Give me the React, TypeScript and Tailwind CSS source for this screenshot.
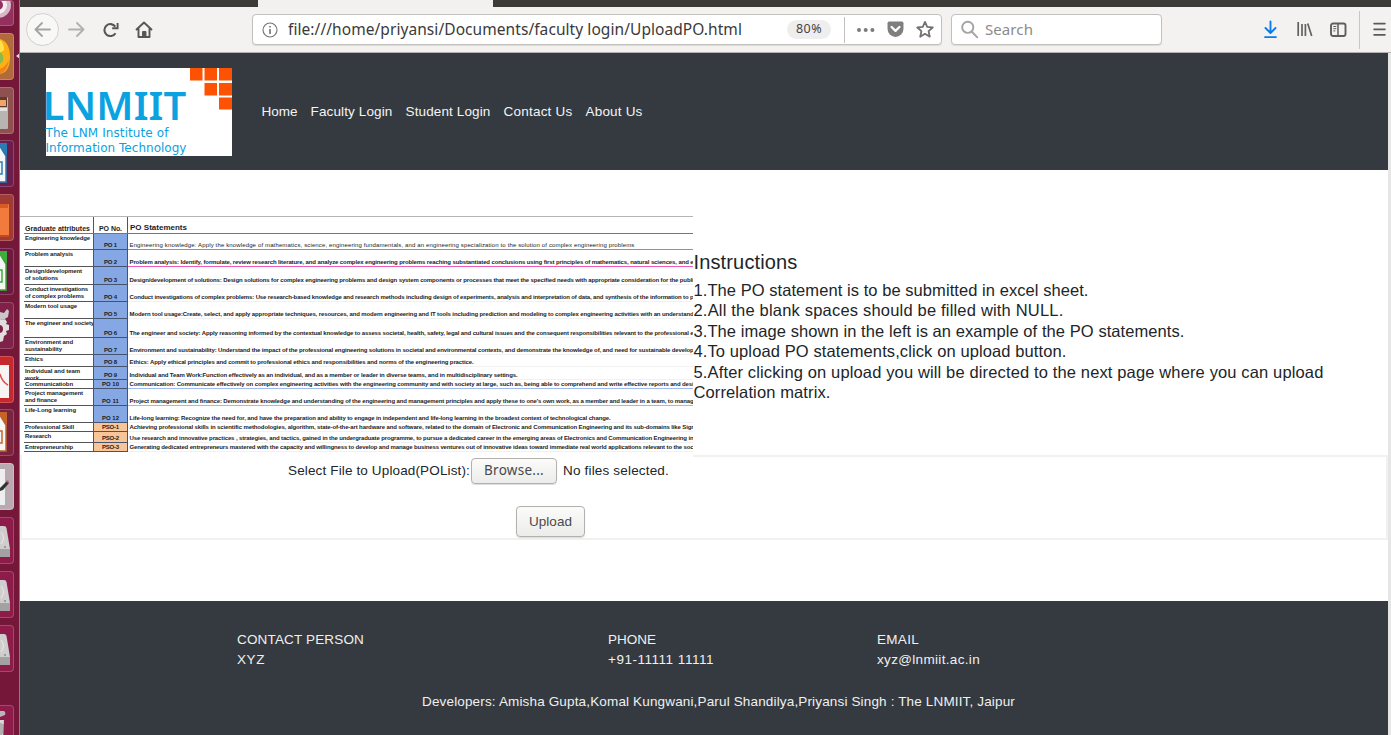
import { useLayoutEffect, useRef, useState, type ReactNode } from "react";

/** Single line of text whose tracking is adjusted so that it fills `w` pixels. */
function Fit({ w, children, className = "" }: { w: number; children: string; className?: string }) {
  const ref = useRef<HTMLSpanElement>(null);
  const [spacing, setSpacing] = useState(0);
  useLayoutEffect(() => {
    if (ref.current) {
      const natural = ref.current.getBoundingClientRect().width;
      setSpacing((w - natural) / children.length);
    }
  }, [w, children]);
  return (
    <span ref={ref} className={`inline-block whitespace-pre ${className}`} style={{ letterSpacing: spacing }}>
      {children}
    </span>
  );
}

function Tile({ tone, children, className = "h-[47px]" }: { tone: string; children?: ReactNode; className?: string }) {
  return (
    <div className={`w-[13.500px] shrink-0 overflow-hidden rounded-r-[4px] border-y border-r border-white/20 ${tone} ${className}`}>
      <svg width="14" height="47" viewBox="0 0 14 47" className="block">
        {children}
      </svg>
    </div>
  );
}

function Drive() {
  return (
    <Tile tone="bg-[#8d1c4b]">
      <path d="M0 8h4q2 0 2.500 2L10 31v7q0 1-1 1H0z" fill="#cfcdcd" />
      <path d="M0 31h10v7q0 1-1 1H0z" fill="#a3a1a1" />
      <path d="M1 14q5 6 0 12" fill="none" stroke="#e9e9e9" />
      <circle cx="5" cy="29" r="1" fill="#8a8888" />
    </Tile>
  );
}

function Doc({ fold, tone, mark }: { fold: string; tone: string; mark: string }) {
  return (
    <Tile tone={tone}>
      <path d="M-2 2l8 13v26h-8z" fill="#f6f6f6" stroke={fold} strokeWidth="1.500" />
      <path d="M-2 2h9v13z" fill={fold} />
      <path d="M0 21h2v12H0" fill="none" stroke={mark} strokeWidth="1.500" />
    </Tile>
  );
}

function Launcher() {
  return (
    <aside className="flex h-full w-[20px] shrink-0 flex-col gap-[6.8px] overflow-hidden border-r border-[#a86d87] bg-[#741739]">
      <Tile tone="bg-[#93305d]" className="h-[26px]">
        <circle cx="-2" cy="4" r="13" fill="#d9b6c6" />
        <circle cx="-2" cy="4" r="9" fill="#f4eef1" />
        <circle cx="-2" cy="4" r="5" fill="#93305d" />
      </Tile>
      <div className="flex items-center gap-[2px]">
        <Tile tone="bg-[#b06a3c]">
          <path d="M0 5q10 3 10 18T0 40z" fill="#fbb116" />
          <path d="M0 6q4 3 4 10l-4 3z" fill="#fde04a" />
          <path d="M0 18q4 2 3 9l-3 3z" fill="#8cba4c" />
          <path d="M0 35q7-3 9-10-1 12-9 15z" fill="#f08418" />
        </Tile>
        <svg width="4" height="6" viewBox="0 0 4 6" className="shrink-0"><path d="M4 0v6L0 3z" fill="#eedde4" /></svg>
      </div>
      <Tile tone="bg-[#8f5150]">
        <path d="M0 9h7q1 0 1 1v30q0 1-1 1H0z" fill="#b7b4b1" />
        <path d="M0 9h7v10H0z" fill="#5c3b2b" />
        <path d="M0 12h6v6H0z" fill="#f0a46c" />
        <path d="M0 20h7v3H0z" fill="#e4e2e0" />
      </Tile>
      <Doc fold="#2a7cb4" tone="bg-[#6b1d4b]" mark="#2a7cb4" />
      <Tile tone="bg-[#9f3a35]">
        <path d="M0 9h8q1 0 1 1v31H0z" fill="#f17a3c" />
        <path d="M0 9h8v4H0z" fill="#d95a24" />
        <path d="M0 40h9v2H0z" fill="#c24c1f" />
      </Tile>
      <Doc fold="#3dae39" tone="bg-[#6c1a3f]" mark="#3dae39" />
      <Tile tone="bg-[#7f2149]">
        <path d="M0 9l4 1 3-4 2 2-1 6-5 3-3-1z" fill="#c9c7c7" />
        <path d="M0 16l3 1 2-1 2 3-1 2 3 1v5l-3 1 1 3-3 2-1 5-3 1z" fill="#e0dede" />
        <circle cx="-1" cy="26" r="4" fill="#7f2149" />
      </Tile>
      <Tile tone="bg-[#c5282d]">
        <path d="M0 8h9v33H0z" fill="#f7f4f4" />
        <path d="M0 17q2 8 8 11" fill="none" stroke="#e5494c" strokeWidth="1.500" />
      </Tile>
      <Doc fold="#c4642b" tone="bg-[#7a2440]" mark="#c4642b" />
      <Tile tone="bg-[#b9a9b1]">
        <path d="M0 5h5v36H0z" fill="#eeeeee" />
        <path d="M0 24l7-7 2 2-6 7-3 1z" fill="#333333" />
        <path d="M6 17l2-1 1 2-1 1z" fill="#d8587a" />
      </Tile>
      <Drive />
      <Drive />
      <Drive />
      <div className="h-[20px] shrink-0" />
      <Tile tone="bg-[#8d1c4b]">
        <path d="M0 5h4q2 1 1 4l-5 2z" fill="#b9b7b7" />
        <path d="M0 14h4l-1 20H0z" fill="#d8d6d6" />
        <path d="M1 17v15M3 18v10" stroke="#777" strokeWidth=".8" />
      </Tile>
    </aside>
  );
}

const stroke = { fill: "none", strokeLinecap: "round", strokeLinejoin: "round" } as const;

function BrowserBar() {
  return (
    <>
      <div className="flex h-[7px] bg-[#3c3b37]">
        <div className="ml-[238px] w-[235px] bg-[#f2f1f0]" />
      </div>
      <div className="flex h-[46px] items-center border-b border-[#b4b2b0] bg-[#f3f2f0] font-['Noto_Sans',sans-serif]">
        <div className="ml-[6px] flex size-[33px] items-center justify-center rounded-full border border-[#d2d0ce] bg-[#f8f8f7]">
          <svg width="17" height="15" viewBox="0 0 17 15" {...stroke} stroke="#a6a5a4" strokeWidth="1.800"><path d="M8 1L1.500 7.500 8 14M2 7.500h14" /></svg>
        </div>
        <svg className="ml-[9px]" width="17" height="15" viewBox="0 0 17 15" {...stroke} stroke="#b3b1b0" strokeWidth="1.800"><path d="M9 1l6.500 6.500L9 14M15 7.500H1" /></svg>
        <svg className="ml-[17px]" width="18" height="16" viewBox="0 0 18 16" fill="none" stroke="#575655" strokeWidth="2.100">
          <path d="M13.500 11.200A6 6 0 1 1 13.300 4.600" />
          <path d="M15.600 1v5.300h-5.400" strokeWidth="1.900" />
        </svg>
        <svg className="ml-[15px]" width="18" height="18" viewBox="0 0 18 18" fill="none" stroke="#575655" strokeWidth="1.900" strokeLinejoin="round">
          <path d="M1 9l8-7.500L17 9M3.500 7.500V16h11V7.500" />
          <path d="M8 16v-5h2.500v5" fill="#575655" />
        </svg>
        <div className="ml-[99px] flex h-[31px] w-[690px] items-center rounded-[4px] border border-[#c3c1be] bg-white shadow-[0_1px_1px_#dddbd8]">
          <svg className="ml-[9px]" width="16" height="16" viewBox="0 0 16 16" fill="none" stroke="#737271">
            <circle cx="8" cy="8" r="7" strokeWidth="1.100" />
            <path d="M8 7v5M8 4v1.600" strokeWidth="1.600" />
          </svg>
          <div className="ml-[10px] w-[499px] text-[15.500px] leading-none text-[#3a3a3a]">
            <Fit w={454}>file:///home/priyansi/Documents/faculty login/UploadPO.html</Fit>
          </div>
          <div className="flex h-[19px] w-[44px] items-center justify-center rounded-full bg-[#eeeeee] text-[12.500px] leading-none text-[#444]">
            <Fit w={26}>80%</Fit>
          </div>
          <div className="ml-[13px] h-[26px] w-px bg-[#c2c1c0]" />
          <svg className="ml-[12px] shrink-0" width="18" height="4" viewBox="0 0 18 4" fill="#7c7b7a"><circle cx="2" cy="2" r="2" /><circle cx="8.700" cy="2" r="2" /><circle cx="15.400" cy="2" r="2" /></svg>
          <svg className="ml-[12px] shrink-0" width="17" height="17" viewBox="0 0 16 15">
            <path d="M2 0h12q1.500 0 1.500 1.500V7A7.500 7.500 0 0 1 .5 7V1.500Q.5 0 2 0z" fill="#807f7e" />
            <path d="M4.300 5.200L8 8.800l3.700-3.600" {...stroke} stroke="#fff" strokeWidth="2.100" />
          </svg>
          <svg className="ml-[12px] shrink-0" width="18" height="19" viewBox="0 0 17 17" fill="none" stroke="#737271" strokeWidth="1.700" strokeLinejoin="round">
            <path d="M8.500 1.300l2.100 4.800 5.200.5-3.900 3.500 1.100 5.200-4.500-2.700L4 15.300l1.100-5.200-3.900-3.500 5.200-.5z" />
          </svg>
        </div>
        <div className="ml-[9px] flex h-[31px] w-[211px] items-center rounded-[4px] border border-[#c3c1be] bg-white shadow-[0_1px_1px_#dddbd8]">
          <svg className="ml-[9px]" width="18" height="19" viewBox="0 0 16 17" {...stroke} stroke="#a5a4a3" strokeWidth="1.700"><circle cx="6" cy="6.500" r="5" /><path d="M9.700 10.500l4.800 5" /></svg>
          <div className="ml-[6px] text-[15px] leading-none text-[#8b8b8b]"><Fit w={48}>Search</Fit></div>
        </div>
        <svg className="ml-[102px]" width="13" height="19" viewBox="0 0 13 18" {...stroke} stroke="#0a7cf0" strokeWidth="1.900"><path d="M6.500 1v11M1.500 7.500l5 5 5-5M1 16.600h11" /></svg>
        <svg className="ml-[20px]" width="16" height="15" viewBox="0 0 16 15" fill="none" stroke="#626160" strokeWidth="1.700"><path d="M1.200 0v14M5 2v12M8.400 2v12M10.700 1.500l4 12.500" /></svg>
        <svg className="ml-[17px]" width="17" height="16" viewBox="0 0 17 15" fill="none" stroke="#5f5e5d">
          <rect x="1" y="1" width="14.500" height="12.500" rx="2" strokeWidth="1.900" />
          <path d="M8 1v12.500" strokeWidth="1.500" /><path d="M3.300 4h3M3.300 6.200h3M3.300 8.400h2" strokeWidth="1" />
        </svg>
        <div className="ml-[12px] h-[38px] w-px bg-[#c9c7c5]" />
        <svg className="ml-[13px]" width="13" height="15" viewBox="0 0 12 14" {...stroke} stroke="#5b5a59" strokeWidth="1.700"><path d="M1 1.500h10M1 6.800h10M1 12h10" /></svg>
      </div>
    </>
  );
}

function Logo() {
  return (
    <div className="flex h-[88px] w-[186px] justify-between bg-white text-[#0aa2e0]">
      <div className="w-[142px] shrink-0 pt-[18px]">
        <div className="h-[40px] font-['Noto_Sans',sans-serif] text-[40px] font-semibold leading-[37px]"><Fit w={144} className="-ml-[3px]">LNMIIT</Fit></div>
        <div className="h-[15px] font-['DejaVu_Sans',sans-serif] text-[12px] leading-[15px]"><Fit w={123}>The LNM Institute of</Fit></div>
        <div className="h-[15px] font-['DejaVu_Sans',sans-serif] text-[12px] leading-[15px]"><Fit w={141}>Information Technology</Fit></div>
      </div>
      <svg width="43" height="42" viewBox="0 0 43 42" fill="#fd5203" className="shrink-0">
        <path d="M1 0h12.500v12.500H1zM15.500 0H28v12.500H15.500zM30 0h13v12.500H30zM15.500 15H28v12.500H15.500zM30 15h13v12.500H30zM30 29.500h13V41.500H30z" />
      </svg>
    </div>
  );
}

const nav: [string, number, string][] = [
  ["Home", 36, "ml-[30px]"],
  ["Faculty Login", 82, "ml-[13px]"],
  ["Student Login", 85, "ml-[13px]"],
  ["Contact Us", 69, "ml-[13px]"],
  ["About Us", 57, "ml-[13px]"],
];

type Row = { h: string; attr: string[]; no: string; text: string; w: number; line?: string; plain?: boolean; pso?: boolean; aw: number[] };

const rows: Row[] = [
  { h: "h-[16px]", attr: ["Engineering knowledge"], aw: [65], no: "PO 1", w: 505, plain: true, line: "border-b-[#ef5cbb]", text: "Engineering knowledge: Apply the knowledge of mathematics, science, engineering fundamentals, and an engineering specialization to the solution of complex engineering problems" },
  { h: "h-[17px]", attr: ["Problem analysis"], aw: [48], no: "PO 2", w: 564, line: "border-b-[#ef5cbb]", text: "Problem analysis: Identify, formulate, review research literature, and analyze complex engineering problems reaching substantiated conclusions using first principles of mathematics, natural sciences, and e" },
  { h: "h-[18px]", attr: ["Design/development", "of solutions"], aw: [57, 33], no: "PO 3", w: 564, text: "Design/development of solutions: Design solutions for complex engineering problems and design system components or processes that meet the specified needs with appropriate consideration for the publi" },
  { h: "h-[17px]", attr: ["Conduct investigations", "of complex problems"], aw: [63, 59], no: "PO 4", w: 564, text: "Conduct investigations of complex problems: Use research-based knowledge and research methods including design of experiments, analysis and interpretation of data, and synthesis of the information to p" },
  { h: "h-[17px]", attr: ["Modern tool usage"], aw: [52], no: "PO 5", w: 564, text: "Modern tool usage:Create, select, and apply appropriate techniques, resources, and modern engineering and IT tools including prediction and modeling to complex engineering activities with an understand" },
  { h: "h-[19px]", attr: ["The engineer and society"], aw: [69], no: "PO 6", w: 564, text: "The engineer and society: Apply reasoning informed by the contextual knowledge to assess societal, health, safety, legal and cultural issues and the consequent responsibilities relevant to the professional e" },
  { h: "h-[17px]", attr: ["Environment and", "sustainability"], aw: [48, 37], no: "PO 7", w: 564, text: "Environment and sustainability: Understand the impact of the professional engineering solutions in societal and environmental contexts, and demonstrate the knowledge of, and need for sustainable develop" },
  { h: "h-[12px]", attr: ["Ethics"], aw: [18], no: "PO 8", w: 344, text: "Ethics: Apply ethical principles and commit to professional ethics and responsibilities and norms of the engineering practice." },
  { h: "h-[13px]", attr: ["Individual and team", "work"], aw: [55, 14], no: "PO 9", w: 388, text: "Individual and Team Work:Function effectively as an individual, and as a member or leader in diverse teams, and in multidisciplinary settings." },
  { h: "h-[9px]", attr: ["Communicatiobn"], aw: [48], no: "PO 10", w: 564, line: "border-b-[#9fb9ee]", text: "Communication: Communicate effectively on complex engineering activities with the engineering community and with society at large, such as, being able to comprehend and write effective reports and desi" },
  { h: "h-[17px]", attr: ["Project management", "and finance"], aw: [58, 32], no: "PO 11", w: 564, line: "border-b-[#9fb9ee]", text: "Project management and finance: Demonstrate knowledge and understanding of the engineering and management principles and apply these to one's own work, as a member and leader in a team, to manag" },
  { h: "h-[17px]", attr: ["Life-Long learning"], aw: [51], no: "PO 12", w: 481, text: "Life-long learning: Recognize the need for, and have the preparation and ability to engage in independent and life-long learning in the broadest context of technological change." },
  { h: "h-[9px]", attr: ["Professional Skill"], aw: [49], no: "PSO-1", w: 564, pso: true, text: "Achieving professional skills in scientific methodologies, algorithm, state-of-the-art hardware and software, related to the domain of Electronic and Communication Engineering and its sub-domains like Sigr" },
  { h: "h-[11px]", attr: ["Research"], aw: [26], no: "PSO-2", w: 564, pso: true, text: "Use research and innovative practices , strategies, and tactics, gained in the undergraduate programme, to pursue a dedicated career in the emerging areas of Electronics and Communication Engineering in" },
  { h: "h-[9px]", attr: ["Entrepreneurship"], aw: [48], no: "PSO-3", w: 564, pso: true, text: "Generating dedicated entrepreneurs mastered with the capacity and willingness to develop and manage business ventures out of innovative ideas toward immediate real world applications relevant to the soc" },
];

function PoTable() {
  return (
    <div className="h-[239px] w-[673px] shrink-0 overflow-hidden border-t border-[#b5b5b5] bg-white pl-[4px] text-[6px] font-bold leading-[7px] text-[#1c1c1c]">
      <div className="flex h-[17px] items-end border-b border-[#777] text-[7px] leading-[9px]">
        <div className="h-full w-[70px] border-r border-[#555] pl-px pt-[7px]"><Fit w={65}>Graduate attributes</Fit></div>
        <div className="h-full w-[34px] border-r border-[#555] pt-[7px] text-center"><Fit w={23}>PO No.</Fit></div>
        <div className="h-full pl-[2px] pt-[6px] text-[8px]"><Fit w={57}>PO Statements</Fit></div>
      </div>
      {rows.map((r) => (
        <div key={r.no} className={`flex ${r.h}`}>
          <div className="w-[70px] overflow-hidden border-b border-r border-[#555] pl-px pt-px">
            {r.attr.map((a, i) => (
              <div key={a} className="h-[7px]"><Fit w={r.aw[i]}>{a}</Fit></div>
            ))}
          </div>
          <div className={`flex w-[34px] items-end justify-center border-b border-r border-[#44536f] ${r.pso ? "bg-[#f8c598]" : "bg-[#85a7e4]"}`}>
            <Fit w={r.no.length > 4 ? 17 : 13}>{r.no}</Fit>
          </div>
          <div className={`flex flex-1 items-end overflow-hidden border-b pl-[1.500px] ${r.line ?? "border-b-[#f1f1f1]"} ${r.plain ? "font-normal" : ""}`}>
            <Fit w={r.w}>{r.text}</Fit>
          </div>
        </div>
      ))}
    </div>
  );
}

const steps: [string, number][] = [
  ["1.The PO statement is to be submitted in excel sheet.", 395],
  ["2.All the blank spaces should be filled with NULL.", 370],
  ["3.The image shown in the left is an example of the PO statements.", 491],
  ["4.To upload PO statements,click on upload button.", 373],
  ["5.After clicking on upload you will be directed to the next page where you can upload", 630],
  ["Correlation matrix.", 137],
];

const button =
  "flex items-center justify-center rounded-[4px] border border-[#b3b1ae] bg-linear-to-b from-[#fbfbfa] to-[#ececeb] text-[#4a4a4a] shadow-[0_1px_1px_#dcdcdc]";

export default function App() {
  return (
    <div className="flex h-[735px] w-[1391px] overflow-hidden bg-white font-['Liberation_Sans',Arial,sans-serif]">
      <Launcher />
      <div className="flex min-w-0 flex-1 flex-col">
        <BrowserBar />
        <div className="flex flex-1">
          <main className="flex w-[1368px] flex-col">
            <header className="flex h-[117px] items-center bg-[#343a40] pl-[25.500px] text-[13.500px] text-[#f4f4f4]">
              <Logo />
              <nav className="flex pt-px">
                {nav.map(([label, w, gap]) => (
                  <a key={label} className={gap}><Fit w={w}>{label}</Fit></a>
                ))}
              </nav>
            </header>
            <section className="flex h-[285px] pt-[46px] text-[#212529]">
              <PoTable />
              <div className="pl-[0.500px] pt-[34px]">
                <h2 className="h-[30px] text-[20px] leading-[24px]"><Fit w={104}>Instructions</Fit></h2>
                {steps.map(([s, w]) => (
                  <p key={s} className="h-[20.400px] text-[16.500px] leading-[20px]"><Fit w={w}>{s}</Fit></p>
                ))}
              </div>
            </section>
            <form className="flex h-[85px] flex-col border-2 border-t-0 border-[#f1f1f1] text-[13.500px] text-[#212529]">
              <div className="flex">
                <div className="w-[671px]" />
                <div className="h-[2px] flex-1 bg-[#f1f1f1]" />
              </div>
              <div className="flex h-[27px] items-center pl-[266px]">
                <Fit w={182} className="pt-[2px]">Select File to Upload(POList):</Fit>
                <div className={`ml-px h-[26px] w-[86px] font-['Noto_Sans',sans-serif] ${button}`}><Fit w={60}>Browse...</Fit></div>
                <Fit w={106} className="ml-[6px] pt-[2px]">No files selected.</Fit>
              </div>
              <div className={`ml-[494px] mt-[22px] h-[31px] w-[69px] pt-px ${button}`}><Fit w={43}>Upload</Fit></div>
            </form>
            <footer className="mt-[61px] flex-1 bg-[#343a40] pt-[29px] text-[13.500px] leading-[20px] text-[#f0f0f0]">
              <div className="flex h-[62px] pl-[217px]">
                <div className="w-[371px]">
                  <div><Fit w={127}>CONTACT PERSON</Fit></div>
                  <div><Fit w={28}>XYZ</Fit></div>
                </div>
                <div className="w-[269px]">
                  <div><Fit w={48}>PHONE</Fit></div>
                  <div><Fit w={106}>+91-11111 11111</Fit></div>
                </div>
                <div>
                  <div><Fit w={42}>EMAIL</Fit></div>
                  <div><Fit w={103}>xyz@lnmiit.ac.in</Fit></div>
                </div>
              </div>
              <div className="pl-[402px]"><Fit w={593}>Developers: Amisha Gupta,Komal Kungwani,Parul Shandilya,Priyansi Singh : The LNMIIT, Jaipur</Fit></div>
            </footer>
          </main>
          <div className="flex-1 bg-[#e6e6e6]" />
        </div>
      </div>
    </div>
  );
}
